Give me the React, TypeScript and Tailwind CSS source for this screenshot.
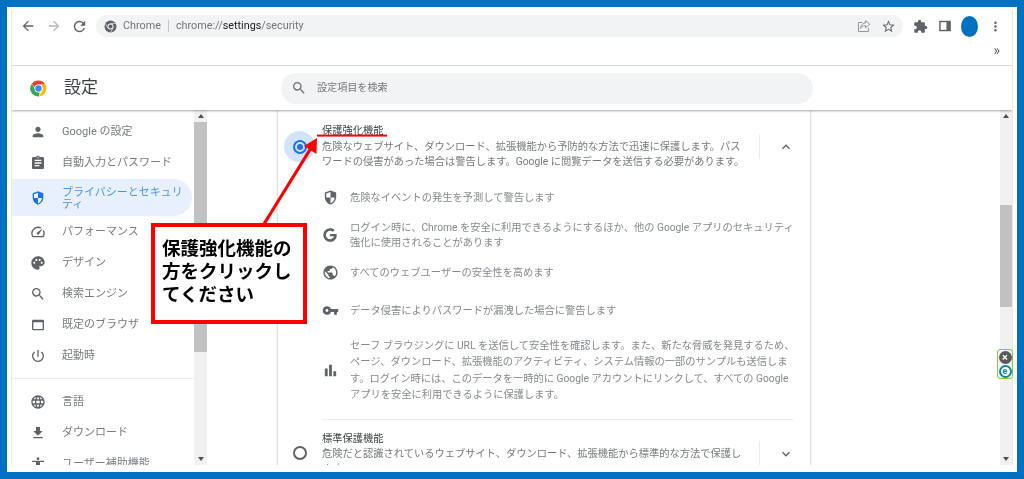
import React from "react";
import {
  MdArrowBack, MdArrowForward, MdRefresh, MdStarBorder, MdExtension, MdMoreVert, MdSearch,
  MdPerson, MdAssignment, MdSpeed, MdPalette, MdWebAsset, MdPowerSettingsNew, MdLanguage,
  MdFileDownload, MdAccessibility, MdKeyboardArrowUp, MdKeyboardArrowDown, MdVpnKey, MdBarChart, MdPublic,
} from "react-icons/md";
import { FaGoogle } from "react-icons/fa";

function ShieldIcon({ className }: { className?: string }) {
  return (
    <svg viewBox="0 0 24 24" className={className} fill="currentColor">
      <path d="M12 2 4 5v6c0 5.2 3.4 9.9 8 11 4.6-1.1 8-5.8 8-11V5l-8-3zm0 2.2V12h6c-.5 3.9-2.9 7.2-6 8.1V12H6V6.4l6-2.2z" />
    </svg>
  );
}

function ChromeLogo() {
  return (
    <svg viewBox="0 0 48 48" className="w-[19px] h-[19px]">
      <path fill="#ea4335" d="M24 4a20 20 0 0 1 17.3 10H24a10 10 0 0 0-9.5 6.9L7.3 11.9A20 20 0 0 1 24 4z" />
      <path fill="#fbbc04" d="M41.3 14A20 20 0 0 1 25 44l8.5-14.7A10 10 0 0 0 32 17.5V14z" />
      <path fill="#34a853" d="M7.3 11.9l8.8 15.2A10 10 0 0 0 27 33.5L25 44A20 20 0 0 1 7.3 11.9z" />
      <circle cx="24" cy="24" r="10" fill="#fff" />
      <circle cx="24" cy="24" r="8" fill="#4285f4" />
    </svg>
  );
}

function ChromeMono() {
  return (
    <svg viewBox="0 0 24 24" className="w-[13px] h-[13px]">
      <circle cx="12" cy="12" r="11" fill="#5f6368" />
      <circle cx="12" cy="12" r="5.6" fill="#f1f3f4" />
      <circle cx="12" cy="12" r="3.8" fill="#5f6368" />
      <path d="M12 6.4h9.4M7.2 14.8 2.6 6.6M16.8 14.8l-4.7 8" stroke="#f1f3f4" strokeWidth="1.2" fill="none" />
    </svg>
  );
}

function ShareIcon() {
  return (
    <svg viewBox="0 0 24 24" className="w-[14px] h-[14px]" fill="none" stroke="#8a8d91" strokeWidth="1.6">
      <path d="M9 6H2.5v15.5h17V15" />
      <path d="M14.5 3 22 9l-7.5 6v-3.6C10 11.4 7.5 13 6 16c.4-5 3.5-9 8.5-9.4V3z" />
    </svg>
  );
}

function SidePanelIcon() {
  return (
    <svg viewBox="0 0 24 24" className="w-[14px] h-[14px]" fill="none">
      <path d="M2 3h20v18H2z" fill="#5f6368" />
      <path d="M4.5 5.5h10v13h-10z" fill="#fff" />
    </svg>
  );
}

type NavItem = { label: string; icon: React.ReactNode; active?: boolean };

const I = "w-[16px] h-[16px]";
const navTop: NavItem[] = [
  { label: "Google の設定", icon: <MdPerson className={I} /> },
  { label: "自動入力とパスワード", icon: <MdAssignment className={I} /> },
];
const navMid: NavItem[] = [
  { label: "パフォーマンス", icon: <MdSpeed className={I} /> },
  { label: "デザイン", icon: <MdPalette className={I} /> },
  { label: "検索エンジン", icon: <MdSearch className={I} /> },
  { label: "既定のブラウザ", icon: <MdWebAsset className={I} /> },
  { label: "起動時", icon: <MdPowerSettingsNew className={I} /> },
];
const navBottom: NavItem[] = [
  { label: "言語", icon: <MdLanguage className={I} /> },
  { label: "ダウンロード", icon: <MdFileDownload className={I} /> },
  { label: "ユーザー補助機能", icon: <MdAccessibility className={I} /> },
];

function NavRow({ item }: { item: NavItem }) {
  return (
    <div className="h-[31px] flex items-center shrink-0 text-[#5f6368]">
      <div className="w-[50px] flex justify-center pl-[2px] shrink-0">{item.icon}</div>
      <span className="pt-[2px] text-[11px] text-[#777b80] whitespace-nowrap">{item.label}</span>
    </div>
  );
}

function Scrollbar({ thumbTop, thumbHeight, width }: { thumbTop: string; thumbHeight: string; width: string }) {
  return (
    <div className={`${width} shrink-0 h-full bg-[#f1f1f1] flex flex-col items-center`}>
      <div className="h-[12px] shrink-0 flex items-center justify-center">
        <div className="w-0 h-0 border-x-[3.5px] border-x-transparent border-b-[4px] border-b-[#505050]" />
      </div>
      <div className={`${thumbTop} shrink-0 w-full`} />
      <div className={`${thumbHeight} shrink-0 w-full bg-[#c1c1c1]`} />
      <div className="flex-1" />
      <div className="h-[13px] shrink-0 flex items-center justify-center">
        <div className="w-0 h-0 border-x-[3.5px] border-x-transparent border-t-[4px] border-t-[#505050]" />
      </div>
    </div>
  );
}

type Feature = { icon: React.ReactNode; lines: string[]; mt: string; lh: string };
const FI = "w-[17px] h-[17px]";
const features: Feature[] = [
  { icon: <ShieldIcon className={FI} />, lines: ["危険なイベントの発生を予測して警告します"], mt: "mt-[20px]", lh: "leading-[15px]" },
  { icon: <FaGoogle className="w-[14px] h-[14px]" />, lines: ["ログイン時に、Chrome を安全に利用できるようにするほか、他の Google アプリのセキュリティ", "強化に使用されることがあります"], mt: "mt-[14px]", lh: "leading-[15px]" },
  { icon: <MdPublic className={FI} />, lines: ["すべてのウェブユーザーの安全性を高めます"], mt: "mt-[14px]", lh: "leading-[15px]" },
  { icon: <MdVpnKey className={FI} />, lines: ["データ侵害によりパスワードが漏洩した場合に警告します"], mt: "mt-[21px]", lh: "leading-[15px]" },
  { icon: <MdBarChart className={FI} />, lines: ["セーフ ブラウジングに URL を送信して安全性を確認します。また、新たな脅威を発見するため、", "ページ、ダウンロード、拡張機能のアクティビティ、システム情報の一部のサンプルも送信しま", "す。ログイン時には、このデータを一時的に Google アカウントにリンクして、すべての Google", "アプリを安全に利用できるように保護します。"], mt: "mt-[19px]", lh: "leading-[16.3px]" },
];

export default function App() {
  return (
    <div className="relative w-[1024px] h-[479px] overflow-hidden bg-[#0070c0] p-[7px] font-['Roboto','Noto_Sans_CJK_JP',sans-serif] blur-[0.4px]">
      <div className="w-full h-full bg-white pt-[4px] px-[4px] pb-[7px]">
        <div className="w-full h-full flex flex-col border-l border-r border-[#e2efd4] overflow-hidden">
          {/* Browser toolbar */}
          <div className="h-[55px] shrink-0 border-b border-[#e0e0e0]">
            <div className="h-[30px] flex items-start pt-[4px]">
              <div className="w-[84px] shrink-0 h-[22px] flex items-center pl-[8px]">
                <MdArrowBack className="w-[16px] h-[16px] text-[#5f6368]" />
                <MdArrowForward className="ml-[10px] w-[16px] h-[16px] text-[#b4b6b8]" />
                <MdRefresh className="ml-[9px] w-[17px] h-[17px] text-[#5f6368]" />
              </div>
              <div className="w-[807px] shrink-0 h-[22px] rounded-full bg-[#f1f3f4] flex items-center pl-[8px] pr-[7px]">
                <ChromeMono />
                <span className="mt-[1px] ml-[6px] text-[10.8px] text-[#70757a]">Chrome</span>
                <div className="w-px h-[12px] bg-[#c4c7c9] mx-[7px]" />
                <span className="mt-[1px] text-[10.8px] text-[#70757a]">chrome://<span className="text-[#202124]">settings</span>/security</span>
                <div className="flex-1" />
                <ShareIcon />
                <div className="w-[10px]" />
                <MdStarBorder className="w-[15px] h-[15px] text-[#5f6368]" />
              </div>
              <div className="flex-1 h-[22px] flex items-center pl-[10px]">
                <MdExtension className="w-[15px] h-[15px] text-[#5f6368]" />
                <div className="ml-[10px]"><SidePanelIcon /></div>
                <div className="ml-[9px] w-[17px] h-[21px] rounded-[50%] bg-[#0070c0]" />
                <MdMoreVert className="ml-[10px] w-[15px] h-[15px] text-[#5f6368]" />
              </div>
            </div>
            <div className="h-[24px] flex justify-end items-start pr-[12px] pt-[2px]">
              <span className="text-[14px] leading-[14px] text-[#5f6368]">»</span>
            </div>
          </div>

          {/* Settings header */}
          <div className="relative z-10 h-[44px] shrink-0 flex items-center bg-white shadow-[0_1px_2px_rgba(0,0,0,0.35)]">
            <div className="w-[52px] flex justify-center shrink-0"><ChromeLogo /></div>
            <span className="text-[17px] text-[#3c4043]">設定</span>
            <div className="ml-[183px] w-[532px] h-[31px] rounded-full bg-[#f1f3f4] flex items-center pl-[10px]">
              <MdSearch className="w-[16px] h-[16px] text-[#6f7377]" />
              <span className="ml-[10px] text-[10.1px] text-[#75797d]">設定項目を検索</span>
            </div>
          </div>

          {/* Page body */}
          <div className="flex-1 flex min-h-0 overflow-hidden">
            {/* Sidebar */}
            <div className="w-[182px] shrink-0 h-full overflow-hidden flex flex-col pt-[6px]">
              {navTop.map((n) => <NavRow key={n.label} item={n} />)}
              <div className="mt-[1px] h-[37px] shrink-0 w-[180px] rounded-r-full bg-[#e8f0fe] flex items-center text-[#1a73e8]">
                <div className="w-[50px] flex justify-center pl-[2px] shrink-0"><ShieldIcon className="w-[16px] h-[16px]" /></div>
                <div className="pt-[2px] text-[11px] leading-[12px] text-[#4a93ef] whitespace-nowrap">プライバシーとセキュリ<br />ティ</div>
              </div>
              {navMid.map((n) => <NavRow key={n.label} item={n} />)}
              <div className="h-[15px] shrink-0 flex items-center"><div className="w-full h-px bg-[#ececec]" /></div>
              {navBottom.map((n) => <NavRow key={n.label} item={n} />)}
            </div>
            <Scrollbar width="w-[13px]" thumbTop="h-0" thumbHeight="h-[230px]" />

            {/* Main */}
            <div className="flex-1 min-w-0 flex h-full">
              <div className="ml-[70px] w-[534px] shrink-0 h-full border-x border-[#e3e3e3] shadow-[0_0_2px_rgba(0,0,0,0.12)] overflow-hidden text-[10.25px] text-[#75797d] whitespace-nowrap">
                {/* Enhanced protection */}
                <div className="flex items-start">
                  <div className="ml-[6px] mt-[21px] w-[31px] h-[31px] rounded-full bg-[#d2e3fc] flex items-center justify-center shrink-0">
                    <div className="w-[14px] h-[14px] rounded-full border-2 border-[#1a73e8] flex items-center justify-center">
                      <div className="w-[6px] h-[6px] rounded-full bg-[#1a73e8]" />
                    </div>
                  </div>
                  <div className="ml-[7px] w-[437px] shrink-0 pt-[13px] leading-[15px]">
                    <div className="text-[#3c4043] h-[16px]">保護強化機能</div>
                    <div>危険なウェブサイト、ダウンロード、拡張機能から予防的な方法で迅速に保護します。パス</div>
                    <div>ワードの侵害があった場合は警告します。Google に閲覧データを送信する必要があります。</div>
                  </div>
                  <div className="mt-[24px] h-[25px] w-[52px] border-l border-[#e8e8e8] flex items-center justify-center pl-[1px] shrink-0">
                    <MdKeyboardArrowUp className="w-[16px] h-[16px] text-[#5f6368]" />
                  </div>
                </div>

                {features.map((f, i) => (
                  <div key={i} className={`${f.mt} ${f.lh} flex items-center pl-[43px]`}>
                    <div className="w-[18px] flex justify-center shrink-0 text-[#5f6368]">{f.icon}</div>
                    <div className="ml-[11px] text-[#85898e]">
                      {f.lines.map((l) => <div key={l}>{l}</div>)}
                    </div>
                  </div>
                ))}

                <div className="mt-[16px] ml-[44px] w-[472px] h-px bg-[#ececec]" />

                {/* Standard protection */}
                <div className="flex items-start">
                  <div className="ml-[15px] mt-[26px] w-[14px] h-[14px] rounded-full border-2 border-[#5f6368] shrink-0" />
                  <div className="ml-[15px] w-[437px] shrink-0 pt-[11px] leading-[15px]">
                    <div className="text-[#3c4043] h-[15px]">標準保護機能</div>
                    <div>危険だと認識されているウェブサイト、ダウンロード、拡張機能から標準的な方法で保護し</div>
                    <div>ます。</div>
                  </div>
                  <div className="mt-[21px] h-[25px] w-[52px] border-l border-[#e8e8e8] flex items-center justify-center pl-[1px] shrink-0">
                    <MdKeyboardArrowDown className="w-[16px] h-[16px] text-[#5f6368]" />
                  </div>
                </div>
              </div>
              <div className="flex-1" />
              <Scrollbar width="w-[12px]" thumbTop="h-[83px]" thumbHeight="h-[102px]" />
            </div>
          </div>
        </div>
      </div>

      {/* Annotation overlay */}
      <svg className="absolute left-0 top-0 w-[1024px] h-[479px] pointer-events-none" viewBox="0 0 1024 479">
        <line x1="264" y1="224" x2="311" y2="148" stroke="#ff0000" strokeWidth="3.2" />
        <polygon points="317,138 316.5,154 304,146" fill="#ff0000" />
        <rect x="317" y="134.6" width="70" height="2" fill="#ff0000" />
      </svg>
      <div className="absolute left-[151px] top-[223px] w-[156px] h-[101px] bg-white border-[4px] border-[#ff0000] pl-[7px] pt-[9px] text-[18.5px] leading-[23px] font-bold text-black whitespace-nowrap font-['Noto_Sans_CJK_JP',sans-serif]">
        保護強化機能の<br />方をクリックし<br />てください
      </div>

      {/* Floating extension widget */}
      <div className="absolute left-[997px] top-[349px] w-[16px] h-[30px] rounded-[3px] border border-[#8cc63f] bg-[#f1f1f1] flex flex-col items-center justify-center gap-[1px]">
        <div className="w-[13px] h-[13px] rounded-full bg-[#5a5a5a] flex items-center justify-center text-white text-[11px] leading-[13px] font-bold">×</div>
        <div className="w-[13px] h-[13px] rounded-full border-2 border-[#0e8a9a] bg-white flex items-center justify-center text-[#0e8a9a] text-[9px] leading-[9px] font-bold">e</div>
      </div>
    </div>
  );
}
